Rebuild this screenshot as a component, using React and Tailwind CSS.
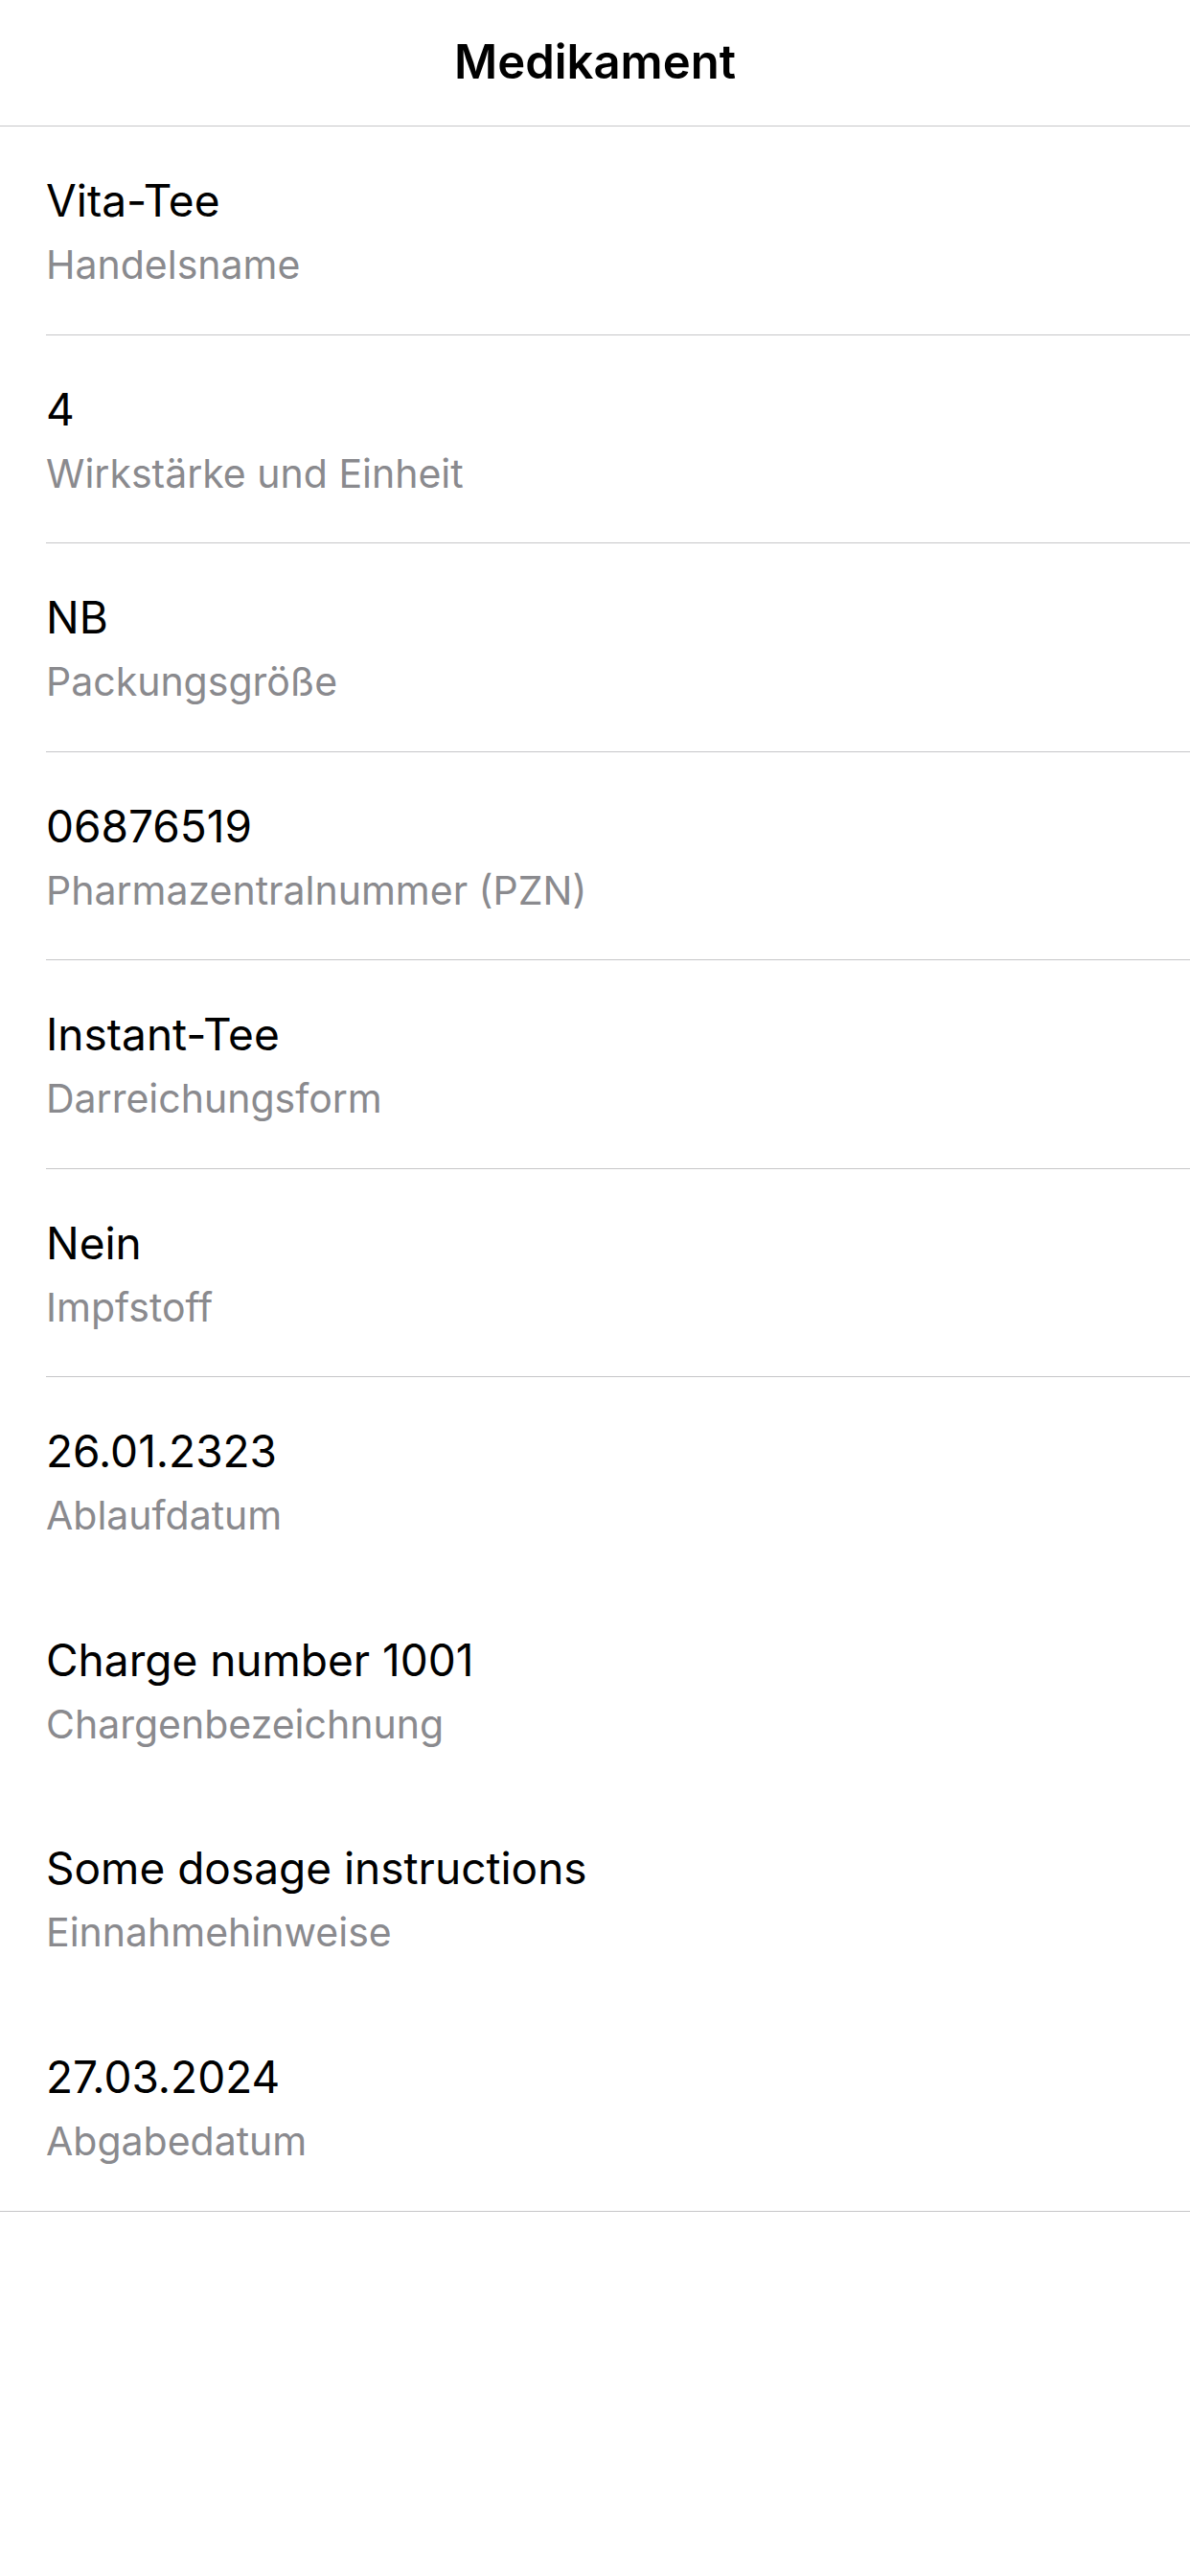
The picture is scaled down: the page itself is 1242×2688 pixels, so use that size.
const rows = [
  { value: 'Vita-Tee', label: 'Handelsname', sep: 'inset' },
  { value: '4', label: 'Wirkstärke und Einheit', sep: 'inset' },
  { value: 'NB', label: 'Packungsgröße', sep: 'inset' },
  { value: '06876519', label: 'Pharmazentralnummer (PZN)', sep: 'inset' },
  { value: 'Instant-Tee', label: 'Darreichungsform', sep: 'inset' },
  { value: 'Nein', label: 'Impfstoff', sep: 'inset' },
  { value: '26.01.2323', label: 'Ablaufdatum', sep: 'none' },
  { value: 'Charge number 1001', label: 'Chargenbezeichnung', sep: 'none' },
  { value: 'Some dosage instructions', label: 'Einnahmehinweise', sep: 'none' },
  { value: '27.03.2024', label: 'Abgabedatum', sep: 'full' },
];

const Row = ({ value, label, sep }) => (
  <div className={sep === 'full' ? 'border-b border-[#c6c6c8]' : ''}>
    <div className="pl-[48px]">
      <div
        className={`h-[217.5px] flex flex-col pt-[50px] ${
          sep === 'inset' ? 'border-b border-[#c6c6c8]' : ''
        }`}
      >
        <span className="text-[46px] leading-[55px] text-black">{value}</span>
        <span className="mt-[15px] text-[41px] leading-[48px] text-[#8a8a8e]">{label}</span>
      </div>
    </div>
  </div>
);

export default function App() {
  return (
    <div
      className="w-[1242px] min-h-[2688px] bg-white"
      style={{ fontFamily: 'Inter, "Noto Sans", sans-serif' }}
    >
      {/* Nav bar */}
      <div className="h-[132px] border-b border-[#c6c6c8] flex items-center justify-center">
        <h1 className="text-[49px] font-semibold text-black leading-none pb-[2px]">Medikament</h1>
      </div>

      {/* Detail list */}
      <div>
        {rows.map((r) => (
          <Row key={r.label} {...r} />
        ))}
      </div>
    </div>
  );
}
